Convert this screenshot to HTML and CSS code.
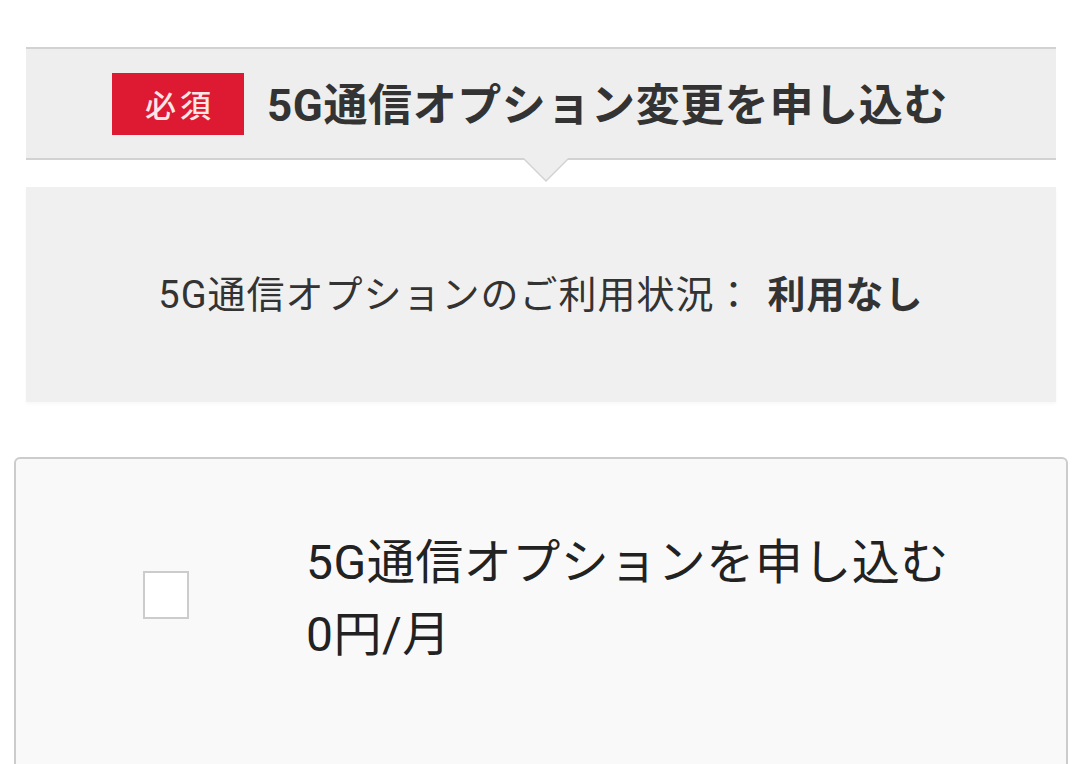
FILE: index.html
```html
<!DOCTYPE html>
<html lang="ja">
<head>
<meta charset="utf-8">
<link rel="stylesheet" href="styles.css">
</head>
<body>
<div class="page">
  <div class="head">
    <span class="badge">必須</span>
    <h2 class="title">5G通信オプション変更を申し込む</h2>
  </div>
  <div class="status">
    <p class="status-text">5G通信オプションのご利用状況：<b>利用なし</b></p>
  </div>
  <div class="option">
    <span class="check"></span>
    <div class="opt-text">
      <div>5G通信オプションを申し込む</div>
      <div>0円/月</div>
    </div>
  </div>
</div>
</body>
</html>
```
FILE: styles.css
```css
html, body {
  margin: 0;
  padding: 0;
  background: #ffffff;
}
body {
  font-family: Roboto, "Noto Sans CJK JP", sans-serif;
  color: #333333;
  overflow: hidden;
  height: 764px;
}
.page {
  padding-top: 47px;
}
.head {
  position: relative;
  margin: 0 24px 0 26px;
  height: 109px;
  background: #eeeeee;
  border-top: 2px solid #d2d2d2;
  border-bottom: 2px solid #d2d2d2;
  display: flex;
  align-items: center;
  padding-left: 86px;
}
.head::before,
.head::after {
  content: "";
  position: absolute;
  left: 496px;
  width: 0;
  height: 0;
  border-left: 24px solid transparent;
  border-right: 24px solid transparent;
}
.head::before {
  top: 109px;
  border-top: 24px solid #d2d2d2;
}
.head::after {
  top: 107px;
  border-top: 24px solid #eeeeee;
}
.badge {
  display: flex;
  align-items: center;
  justify-content: center;
  width: 132px;
  height: 62px;
  background: #de1a33;
  color: #fde6e6;
  font-family: "Noto Sans CJK JP", sans-serif;
  font-size: 31px;
  font-weight: 500;
  letter-spacing: 4px;
  padding-left: 4px;
  box-sizing: border-box;
}
.title {
  margin: 0 0 4px 23px;
  font-size: 44px;
  font-weight: 700;
  color: #333333;
  letter-spacing: 0.6px;
}
.status {
  margin: 27px 24px 0 26px;
  height: 215px;
  background: #f0f0f0;
  display: flex;
  align-items: center;
  justify-content: center;
  box-shadow: 0 2px 3px rgba(0,0,0,0.03);
}
.status-text {
  margin: 0 0 6px 0;
  font-size: 38px;
  color: #333333;
  letter-spacing: 1px;
}
.status-text b {
  margin-left: 14px;
  font-weight: 700;
}
.option {
  margin: 55px 12px 0 14px;
  height: 340px;
  border: 2px solid #cccccc;
  border-radius: 6px;
  background: #f9f9f9;
  display: flex;
  align-items: flex-start;
  padding-top: 68px;
  box-sizing: border-box;
}
.check {
  margin: 44px 0 0 127px;
  width: 46px;
  height: 48px;
  box-sizing: border-box;
  border: 2px solid #cccccc;
  background: #ffffff;
}
.opt-text {
  margin-left: 117px;
  font-size: 48px;
  line-height: 72px;
  color: #222222;
  letter-spacing: 0.5px;
}
```
